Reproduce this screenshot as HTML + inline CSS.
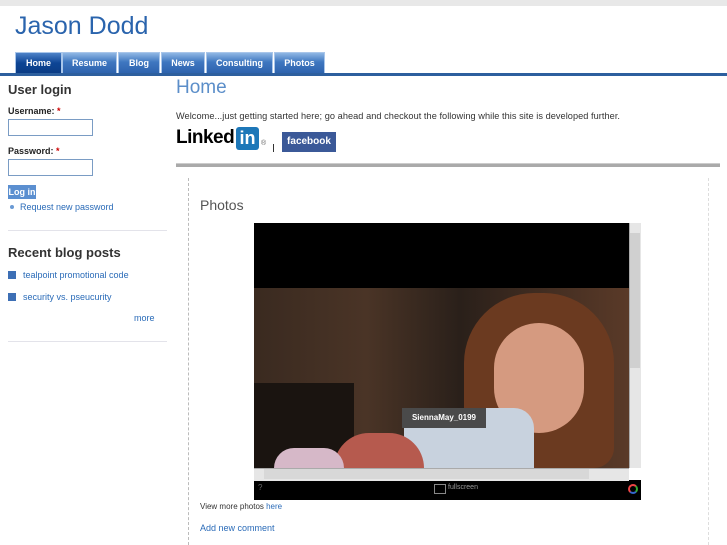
<!DOCTYPE html>
<html><head><style>
body{margin:0;width:727px;height:545px;overflow:hidden;background:#fff;font-family:"Liberation Sans",sans-serif;position:relative}
.a{position:absolute}
.tab{position:absolute;top:52px;height:21px;background:linear-gradient(#8fb6e4,#3f77c0 45%,#2e63ae);color:#fff;font-size:9px;font-weight:bold;text-align:center;line-height:21px;border:1px solid #a9c6ea;border-bottom:none;box-sizing:border-box}
a,.lnk{color:#2a6bb8;text-decoration:none}
</style></head><body>
<div class="a" style="left:0;top:0;width:727px;height:6px;background:#e8e8e8"></div>
<div class="a" style="left:15px;top:12px;font-size:25px;color:#2a64ad">Jason Dodd</div>
<div class="tab" style="left:15px;width:47px;background:linear-gradient(#4d82c8,#0d4595 50%,#0b3c85)">Home</div>
<div class="tab" style="left:62px;width:55px">Resume</div>
<div class="tab" style="left:118px;width:42px">Blog</div>
<div class="tab" style="left:161px;width:44px">News</div>
<div class="tab" style="left:206px;width:67px">Consulting</div>
<div class="tab" style="left:274px;width:51px">Photos</div>
<div class="a" style="left:0;top:73px;width:727px;height:3px;background:#2d5f9e"></div>

<div class="a" style="left:8px;top:82px;font-size:13px;font-weight:bold;color:#333">User login</div>
<div class="a" style="left:8px;top:106px;font-size:9px;font-weight:bold;color:#222">Username: <span style="color:#c00">*</span></div>
<div class="a" style="left:8px;top:119px;width:85px;height:17px;border:1px solid #7a9cc4;box-sizing:border-box"></div>
<div class="a" style="left:8px;top:146px;font-size:9px;font-weight:bold;color:#222">Password: <span style="color:#c00">*</span></div>
<div class="a" style="left:8px;top:159px;width:85px;height:17px;border:1px solid #7a9cc4;box-sizing:border-box"></div>
<div class="a" style="left:8px;top:185px;width:28px;height:14px;background:#5b8fd0;color:#fff;font-size:9px;font-weight:bold;line-height:14px;text-align:center">Log in</div>
<div class="a" style="left:10px;top:205px;width:4px;height:4px;border-radius:2px;background:#6a9ad4"></div>
<div class="a lnk" style="left:20px;top:202px;font-size:9px">Request new password</div>
<div class="a" style="left:8px;top:230px;width:159px;height:1px;background:#e3e3ea"></div>
<div class="a" style="left:8px;top:245px;font-size:13px;font-weight:bold;color:#333">Recent blog posts</div>
<div class="a" style="left:8px;top:271px;width:8px;height:8px;background:#3d6fb5"></div>
<div class="a lnk" style="left:23px;top:270px;font-size:9px">tealpoint promotional code</div>
<div class="a" style="left:8px;top:293px;width:8px;height:8px;background:#3d6fb5"></div>
<div class="a lnk" style="left:23px;top:292px;font-size:9px">security vs. pseucurity</div>
<div class="a lnk" style="left:134px;top:313px;font-size:9px">more</div>
<div class="a" style="left:8px;top:341px;width:159px;height:1px;background:#e3e3ea"></div>

<div class="a" style="left:176px;top:77px;font-size:19px;color:#5b8ec9">Home</div>
<div class="a" style="left:176px;top:111px;font-size:9.2px;color:#333;letter-spacing:0.05px">Welcome...just getting started here; go ahead and checkout the following while this site is developed further.</div>
<div class="a" style="left:176px;top:127px;font-size:19px;font-weight:bold;color:#000;letter-spacing:-0.5px">Linked</div>
<div class="a" style="left:236px;top:127px;width:23px;height:23px;border-radius:3px;background:#1d77b8;color:#fff;font-size:18px;font-weight:bold;line-height:23px;text-align:center">in</div>
<div class="a" style="left:261px;top:140px;font-size:7px;color:#666">®</div>
<div class="a" style="left:273px;top:144px;width:1px;height:8px;background:#333"></div>
<div class="a" style="left:282px;top:132px;width:54px;height:20px;background:#3b5998;color:#fff;font-size:10px;font-weight:bold;line-height:20px;text-align:center">facebook</div>
<div class="a" style="left:176px;top:163px;width:544px;height:3px;background:#aaa;border-top:1px solid #ccc"></div>
<div class="a" style="left:188px;top:178px;height:367px;border-left:1px dashed #bbb"></div>
<div class="a" style="left:708px;top:178px;height:367px;border-left:1px dashed #ddd"></div>

<div class="a" style="left:200px;top:197px;font-size:14px;color:#555">Photos</div>
<div class="a" style="left:254px;top:223px;width:387px;height:277px;background:#000;overflow:hidden">
 <div class="a" style="left:0;top:65px;width:375px;height:180px;background:linear-gradient(90deg,#3a2a20,#4a3426 30%,#2a201a 55%,#5a3a28)"></div>
 <div class="a" style="left:0;top:160px;width:100px;height:85px;background:#1a1410"></div>
 <div class="a" style="left:210px;top:70px;width:150px;height:175px;border-radius:70px 70px 20px 20px;background:#6b3a20"></div>
 <div class="a" style="left:240px;top:100px;width:90px;height:110px;border-radius:45px;background:#d59a80"></div>
 <div class="a" style="left:150px;top:185px;width:130px;height:60px;background:#c8d2de;border-radius:20px 20px 0 0"></div>
 <div class="a" style="left:80px;top:210px;width:90px;height:35px;background:#b65a4e;border-radius:40px 40px 0 0"></div>
 <div class="a" style="left:20px;top:225px;width:70px;height:20px;background:#d6b8c8;border-radius:20px 20px 0 0"></div>
 <div class="a" style="left:148px;top:185px;width:84px;height:20px;background:#4a4a4a;color:#fff;font-size:8px;font-weight:bold;line-height:20px;text-align:center">SiennaMay_0199</div>
 <div class="a" style="left:375px;top:0;width:12px;height:245px;background:#e6e6e6;border-left:1px solid #aaa"></div>
 <div class="a" style="left:376px;top:10px;width:10px;height:135px;background:#d0d0d0"></div>
 <div class="a" style="left:0;top:245px;width:375px;height:12px;background:#e6e6e6;border-top:1px solid #aaa"></div>
 <div class="a" style="left:10px;top:246px;width:325px;height:10px;background:#d8d8d8"></div>
 <div class="a" style="left:375px;top:245px;width:12px;height:12px;background:#fff"></div>
 <div class="a" style="left:180px;top:261px;width:10px;height:8px;border:1px solid #888"></div>
 <div class="a" style="left:194px;top:261px;font-size:7px;color:#999">fullscreen</div>
 <div class="a" style="left:4px;top:260px;font-size:8px;color:#666">?</div>
 <div class="a" style="left:374px;top:261px;width:6px;height:6px;border-radius:50%;border:2px solid #e44;border-right-color:#3a3;border-bottom-color:#36c"></div>
</div>
<div class="a" style="left:200px;top:502px;font-size:8px;color:#333">View more photos <a>here</a></div>
<div class="a lnk" style="left:200px;top:523px;font-size:9px">Add new comment</div>
</body></html>
